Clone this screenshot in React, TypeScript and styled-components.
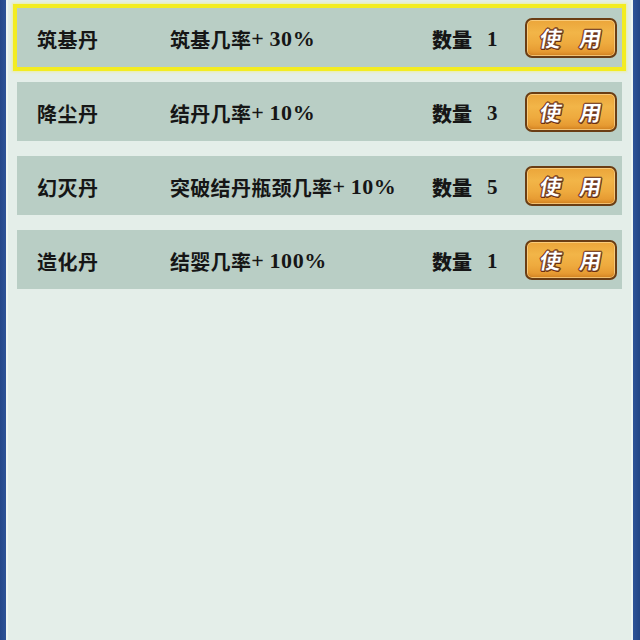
import React from "react";
import styled, { createGlobalStyle, css } from "styled-components";

const Global = createGlobalStyle`
  html, body { margin: 0; padding: 0; background: #2b4f92; }
  body { width: 640px; height: 640px; overflow: hidden; }
  #root { height: 640px; }
`;

const Frame = styled.div`
  box-sizing: border-box;
  height: 640px;
  padding: 0 7px 0 6px;
  background: linear-gradient(90deg, #24468a 0, #2d5398 6px, #2d5398 633px, #234585 640px);
`;

const Panel = styled.div`
  box-sizing: border-box;
  height: 100%;
  background: #e4eee9;
  border-left: 2px solid #eef5f2;
  border-right: 2px solid #eef5f2;
  padding: 8px 9px 0 9px;
  display: flex;
  flex-direction: column;
  gap: 15px;
`;

const Row = styled.div<{ $selected?: boolean }>`
  box-sizing: border-box;
  height: 59px;
  background: #b9cec5;
  display: grid;
  grid-template-columns: 133px 262px 1fr 92px;
  align-items: center;
  padding: 0 5px 0 20px;
  font-family: "Liberation Serif", "Noto Sans CJK SC", serif;
  font-weight: 700;
  font-size: 20px;
  color: #161616;
  ${(p) =>
    p.$selected &&
    css`
      box-shadow: 0 0 0 4px #f3ec22, 0 0 2px 5px rgba(240, 236, 120, 0.6);
    `}
`;

const Name = styled.span`
  padding-top: 3px;
  font-family: "Noto Sans CJK SC", sans-serif;
  font-weight: 700;
  letter-spacing: 0.5px;
`;

const Effect = styled.span`
  padding-top: 3px;
  white-space: nowrap;
  display: flex;
  align-items: center;
`;

const EffectText = styled.span`
  font-family: "Noto Sans CJK SC", sans-serif;
  font-weight: 700;
  letter-spacing: 0.3px;
`;

const EffectValue = styled.span`
  font-family: "Liberation Serif", serif;
  font-weight: 700;
  font-size: 22px;
  letter-spacing: 0.6px;
  word-spacing: -1px;
`;

const Count = styled.span`
  padding-top: 3px;
  display: flex;
  align-items: center;
  gap: 15px;
`;

const CountLabel = styled.span`
  font-family: "Noto Sans CJK SC", sans-serif;
  font-weight: 900;
`;

const CountValue = styled.span`
  font-size: 21px;
`;

const UseButton = styled.button`
  box-sizing: border-box;
  width: 92px;
  height: 40px;
  border: 2px solid #6a3d14;
  border-radius: 7px;
  background: linear-gradient(180deg, #eba53a 0%, #f2b548 35%, #eeaa3e 65%, #e2922c 100%);
  box-shadow: inset 0 0 0 1px rgba(255, 220, 150, 0.7), inset 0 -2px 3px rgba(170, 90, 10, 0.35);
  display: flex;
  align-items: center;
  justify-content: center;
  gap: 17px;
  padding: 0 0 2px;
  font-family: "Noto Sans CJK SC", sans-serif;
  font-weight: 900;
  font-size: 22px;
  color: #ffffff;
  -webkit-text-stroke: 0.5px #5e2a0c;
  text-shadow: 1px 1px 0 #6e2f10, -1px 0 0 #7e3a14, 0 -1px 0 #7e3a14, 1px 0 0 #7e3a14, 0 1px 0 #7e3a14;
  cursor: pointer;
`;

const Glyph = styled.span`
  display: inline-block;
  transform: skewX(-10deg);
`;

const items = [
  { name: "筑基丹", effect: "筑基几率", value: "+ 30%", count: 1 },
  { name: "降尘丹", effect: "结丹几率", value: "+ 10%", count: 3 },
  { name: "幻灭丹", effect: "突破结丹瓶颈几率", value: "+ 10%", count: 5 },
  { name: "造化丹", effect: "结婴几率", value: "+ 100%", count: 1 },
];

export default function App() {
  return (
    <>
      <Global />
      <Frame>
        <Panel>
          {items.map((it, i) => (
            <Row key={it.name} $selected={i === 0}>
              <Name>{it.name}</Name>
              <Effect>
                <EffectText>{it.effect}</EffectText>
                <EffectValue>{it.value}</EffectValue>
              </Effect>
              <Count>
                <CountLabel>数量</CountLabel>
                <CountValue>{it.count}</CountValue>
              </Count>
              <UseButton>
                <Glyph>使</Glyph>
                <Glyph>用</Glyph>
              </UseButton>
            </Row>
          ))}
        </Panel>
      </Frame>
    </>
  );
}
